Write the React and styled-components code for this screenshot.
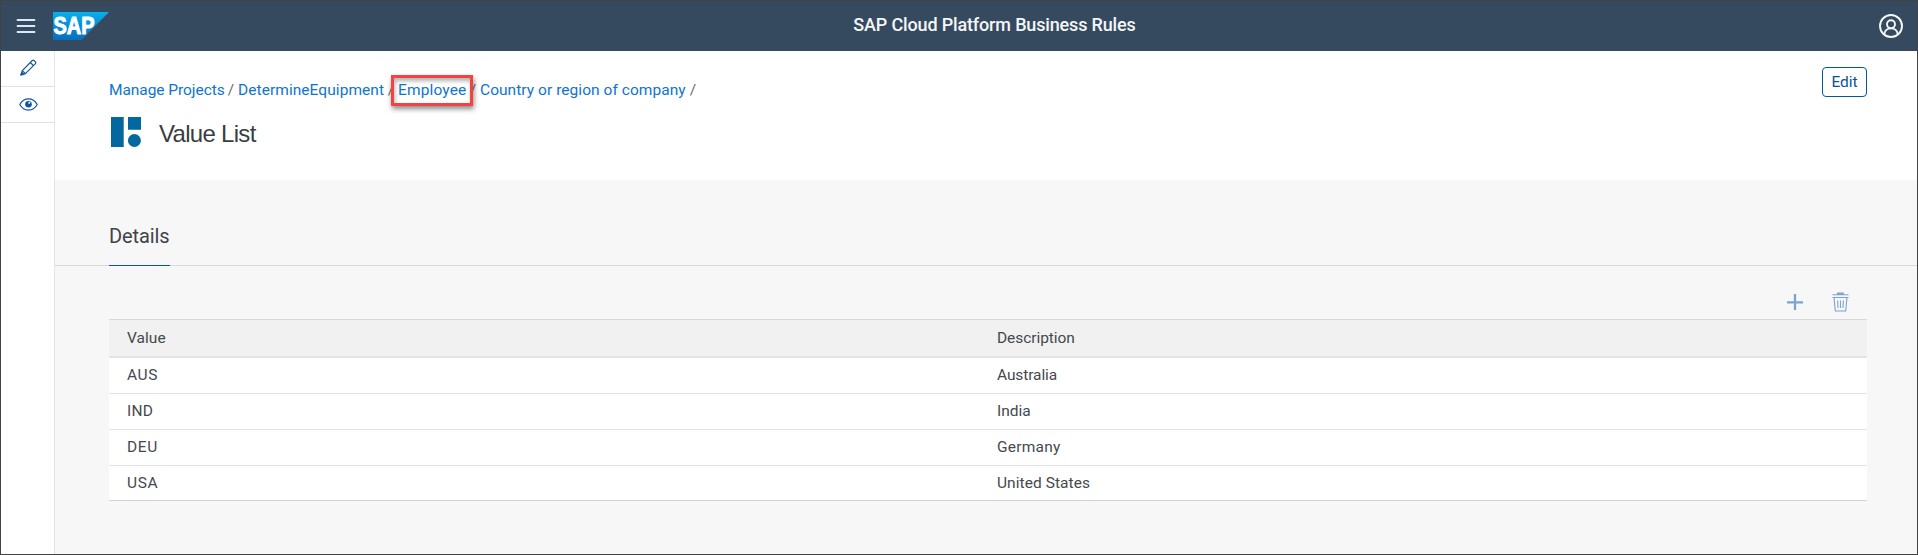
import React from "react";
import styled, { createGlobalStyle } from "styled-components";

const Global = createGlobalStyle`
  * { box-sizing: border-box; }
  html, body { margin: 0; padding: 0; }
  body { font-family: Roboto, "Liberation Sans", sans-serif; font-size: 15.5px; color: #45494d; }
`;

const Page = styled.div`
  display: flex;
  flex-direction: column;
  width: 1918px;
  height: 555px;
  border: 1px solid #434343;
  background: #fff;
  overflow: hidden;
`;

const ShellBar = styled.header`
  display: grid;
  grid-template-columns: 1fr auto 1fr;
  align-items: center;
  flex: none;
  height: 50px;
  padding: 0 14px 0 15px;
  background: #354a5f;
`;

const ShellStart = styled.div`
  display: flex;
  align-items: center;
  gap: 17px;
`;

const ShellEnd = styled.div`
  display: flex;
  justify-content: flex-end;
`;

const Icon = styled.svg`
  display: block;
  flex: none;
  fill: none;
`;

const ShellTitle = styled.h1`
  margin: 0;
  font-size: 18px;
  line-height: 24px;
  font-weight: 500;
  color: #f4f6f8;
  letter-spacing: ${(p) => p.$spacing}px;
  padding: 0 0 2px 70px;
  white-space: nowrap;
`;

const Body = styled.div`
  display: flex;
  flex: 1;
  min-height: 0;
`;

const SideNav = styled.nav`
  flex: none;
  width: 54px;
  border-right: 1px solid #e5e5e5;
`;

const NavItem = styled.a`
  display: flex;
  align-items: center;
  justify-content: center;
  height: 36px;
  padding-left: 1px;
  padding-bottom: ${(p) => p.$lift}px;
  border-bottom: 1px solid #e1e1e1;
`;

const Main = styled.main`
  flex: 1;
  display: flex;
  flex-direction: column;
  background: #f7f7f7;
`;

const ObjectHeader = styled.section`
  display: flex;
  justify-content: space-between;
  align-items: flex-start;
  height: 129px;
  padding: 16px 50px 0 54px;
  background: #fff;
`;

const Breadcrumbs = styled.div`
  display: flex;
  height: 20px;
  margin-top: 13px;
  line-height: 20px;
  white-space: pre;
`;

const Crumb = styled.a`
  position: relative;
  width: ${(p) => p.$width}px;
  color: #0f74d0;
  letter-spacing: ${(p) => p.$spacing}px;
`;

const Slash = styled.span`
  width: 14px;
  text-align: center;
  color: #6a6d70;
`;

const Highlight = styled.span`
  position: absolute;
  left: -7px;
  top: -5px;
  width: 82px;
  height: 31px;
  border: 3px solid #f5413f;
  box-shadow: 1px 3px 5px rgba(0, 0, 0, 0.45), inset 1px 3px 4px rgba(0, 0, 0, 0.3);
`;

const TitleRow = styled.div`
  display: flex;
  align-items: flex-start;
  gap: 18px;
  margin: 17px 0 0 2px;
`;

const ObjectTitle = styled.h2`
  margin: 0;
  padding-top: 2px;
  font-family: "Liberation Sans", Arial, sans-serif;
  font-weight: 400;
  font-size: 24px;
  line-height: 30px;
  letter-spacing: -0.7px;
  color: #3a3d41;
`;

const EditButton = styled.button`
  width: 45px;
  height: 30px;
  padding: 0;
  border: 1px solid #0854a0;
  border-radius: 4px;
  background: #fff;
  color: #0854a0;
  font: 400 15.5px/29px Roboto, sans-serif;
`;

const TabBar = styled.div`
  height: 86px;
  padding: 40px 54px 0;
  border-bottom: 1px solid #d9d9d9;
`;

const Tab = styled.div`
  width: 61px;
  height: 46px;
  border-bottom: 1px solid #0854a0;
  font-size: 20px;
  line-height: 32px;
  color: #3f4347;
  letter-spacing: ${(p) => p.$spacing}px;
`;

const Toolbar = styled.div`
  display: flex;
  justify-content: flex-end;
  align-items: center;
  gap: 29px;
  height: 53px;
  padding: 19px 68px 0 0;
`;

const Table = styled.div`
  margin: 0 50px 0 54px;
  border-top: 1px solid #d9d9d9;
`;

const Row = styled.div`
  display: grid;
  grid-template-columns: 870px 1fr;
  height: ${(p) => (p.$last ? 35 : 36)}px;
  padding: 0 18px;
  line-height: 34px;
  background: #fff;
  border-bottom: 1px solid ${(p) => (p.$last ? "#d4d4d4" : "#e3e3e3")};
`;

const HeadRow = styled(Row)`
  height: 38px;
  line-height: 36px;
  background: #f1f1f1;
  border-bottom: 2px solid #e4e4e4;
`;

const Cell = styled.span`
  letter-spacing: ${(p) => p.$spacing || 0}px;
`;

const rows = [
  ["AUS", 0.6, "Australia", -0.1],
  ["IND", 0.3, "India", 0],
  ["DEU", 0.6, "Germany", 0.25],
  ["USA", 0.6, "United States", 0.06],
];

const MenuIcon = () => (
  <Icon width="20" height="16" viewBox="0 0 20 16" stroke="#d8e9fa" strokeWidth="1.8" strokeLinecap="round">
    <path d="M1.5 2H18.5M1.5 8H18.5M1.5 14H18.5" />
  </Icon>
);

const SapLogo = () => (
  <Icon width="56" height="28" viewBox="0 0 56 28">
    <defs>
      <linearGradient id="sapBlue" x1="0" y1="0" x2="0" y2="1">
        <stop offset="0" stopColor="#06b1eb" />
        <stop offset="0.5" stopColor="#098cd3" />
        <stop offset="1" stopColor="#0a6dbd" />
      </linearGradient>
    </defs>
    <path d="M0 0H56L28.5 28H0Z" fill="url(#sapBlue)" />
    <text x="0.5" y="22.3" textLength="41" lengthAdjust="spacingAndGlyphs" fontFamily="Liberation Sans, sans-serif" fontWeight="700" fontSize="23" fill="#fff" stroke="#fff" strokeWidth="1">SAP</text>
  </Icon>
);

const UserIcon = () => (
  <Icon width="24" height="24" viewBox="0 0 24 24" stroke="#f4f7fa" strokeWidth="1.9">
    <circle cx="12" cy="12" r="11" />
    <circle cx="12" cy="10.3" r="4" />
    <path d="M5.2 20.3C5.8 16.6 8.4 14.4 12 14.4S18.2 16.6 18.8 20.3" />
  </Icon>
);

const PencilIcon = () => (
  <Icon width="17" height="17" viewBox="0 0 17 17" stroke="#1054a3" strokeWidth="1.2" strokeLinejoin="round">
    <path d="M1 16L2.3 11.6L12.3 1.5Q13.2 .7 14.1 1.5L15.4 2.8Q16.2 3.7 15.4 4.6L5.4 14.6Z" />
    <path d="M10.3 3.5L13.4 6.6M2.3 11.6L5.4 14.6" />
    <path d="M1 16L1.8 13.3L3.7 15.2Z" fill="#1054a3" />
  </Icon>
);

const EyeIcon = () => (
  <Icon width="19" height="13" viewBox="0 0 19 13" stroke="#1054a3" strokeWidth="1.2">
    <path d="M.8 6.5C3 2.7 6 .9 9.5 .9S16 2.7 18.2 6.5C16 10.3 13 12.1 9.5 12.1S3 10.3 .8 6.5Z" />
    <circle cx="9.5" cy="6.2" r="3.3" fill="#1054a3" stroke="none" />
    <circle cx="10.3" cy="4.8" r="1.1" fill="#dce9f6" stroke="none" />
  </Icon>
);

const ListIcon = () => (
  <Icon width="30" height="30" viewBox="0 0 30 30">
    <path d="M0 0H12.7V30H0ZM17 0H30V12.7H17Z" fill="#03689f" />
    <circle cx="23.4" cy="23.5" r="6.5" fill="#03689f" />
  </Icon>
);

const PlusIcon = () => (
  <Icon width="16" height="16" viewBox="0 0 16 16" stroke="#7ba4ce" strokeWidth="2.3">
    <path d="M0 8.3H16M8 0V16" />
  </Icon>
);

const TrashIcon = () => (
  <Icon width="17" height="20" viewBox="0 0 17 20" stroke="#7ba4ce" strokeWidth="1.1">
    <path d="M.5 2.8H16.5M.5 5.5H16.5" />
    <path d="M5.5 1H11.2V2.5H5.5Z" fill="#7ba4ce" />
    <path d="M2 5.5L3.3 19H13.7L15 5.5M5.6 8.5L6 16M8.5 8.5V16M11.4 8.5L11 16" />
  </Icon>
);

export default function App() {
  return (
    <Page>
      <Global />
      <ShellBar>
        <ShellStart>
          <MenuIcon />
          <SapLogo />
        </ShellStart>
        <ShellTitle $spacing={-0.16}>SAP Cloud Platform Business Rules</ShellTitle>
        <ShellEnd>
          <UserIcon />
        </ShellEnd>
      </ShellBar>
      <Body>
        <SideNav>
          <NavItem $lift={2}><PencilIcon /></NavItem>
          <NavItem $lift={0}><EyeIcon /></NavItem>
        </SideNav>
        <Main>
          <ObjectHeader>
            <div>
              <Breadcrumbs>
                <Crumb $width={115} $spacing={-0.06}>Manage Projects</Crumb>
                <Slash>/</Slash>
                <Crumb $width={146} $spacing={0.06}>DetermineEquipment</Crumb>
                <Slash>/</Slash>
                <Crumb $width={68} $spacing={0.14}>Employee<Highlight /></Crumb>
                <Slash>/</Slash>
                <Crumb $width={206} $spacing={0.05}>Country or region of company</Crumb>
                <Slash>/</Slash>
              </Breadcrumbs>
              <TitleRow>
                <ListIcon />
                <ObjectTitle>Value List</ObjectTitle>
              </TitleRow>
            </div>
            <EditButton>Edit</EditButton>
          </ObjectHeader>
          <TabBar>
            <Tab $spacing={-0.1}>Details</Tab>
          </TabBar>
          <Toolbar>
            <PlusIcon />
            <TrashIcon />
          </Toolbar>
          <Table>
            <HeadRow>
              <Cell $spacing={0.05}>Value</Cell>
              <Cell $spacing={-0.06}>Description</Cell>
            </HeadRow>
            {rows.map(([value, valueSpacing, text, textSpacing], i) => (
              <Row key={value} $last={i === rows.length - 1}>
                <Cell $spacing={valueSpacing}>{value}</Cell>
                <Cell $spacing={textSpacing}>{text}</Cell>
              </Row>
            ))}
          </Table>
        </Main>
      </Body>
    </Page>
  );
}
